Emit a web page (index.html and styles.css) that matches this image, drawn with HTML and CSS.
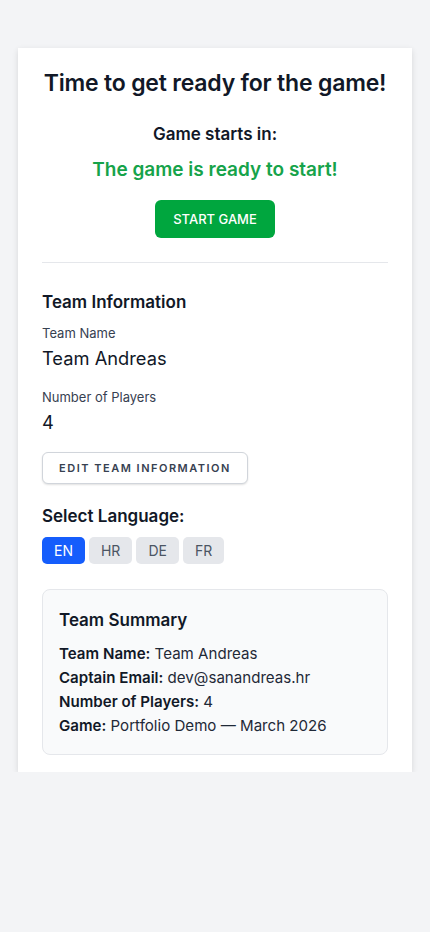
FILE: index.html
```html
<!DOCTYPE html>
<html lang="en">
<head>
<meta charset="utf-8">
<title>Team Lobby</title>
<link rel="stylesheet" href="styles.css">
</head>
<body>
<main class="card">
  <h1 class="title">Time to get ready for the game!</h1>
  <section class="countdown">
    <h2 class="starts">Game starts in:</h2>
    <p class="ready">The game is ready to start!</p>
    <button class="start-btn">START GAME</button>
  </section>
  <hr class="divider">
  <section class="info">
    <h3 class="section-title">Team Information</h3>
    <div class="field">
      <div class="label">Team Name</div>
      <div class="value">Team Andreas</div>
    </div>
    <div class="field">
      <div class="label">Number of Players</div>
      <div class="value">4</div>
    </div>
    <button class="edit-btn">EDIT TEAM INFORMATION</button>
  </section>
  <section class="lang">
    <h3 class="section-title">Select Language:</h3>
    <div class="lang-list">
      <button class="lang-btn active">EN</button>
      <button class="lang-btn">HR</button>
      <button class="lang-btn">DE</button>
      <button class="lang-btn">FR</button>
    </div>
  </section>
  <section class="summary">
    <h3 class="summary-title">Team Summary</h3>
    <p class="row"><b>Team Name:</b> Team Andreas</p>
    <p class="row"><b>Captain Email:</b> dev@sanandreas.hr</p>
    <p class="row"><b>Number of Players:</b> 4</p>
    <p class="row"><b>Game:</b> Portfolio Demo — March 2026</p>
  </section>
</main>
</body>
</html>
```
FILE: styles.css
```css
* { box-sizing: border-box; }
html, body { margin: 0; padding: 0; }
body {
  background: #f3f4f6;
  font-family: "Inter", "Noto Sans", sans-serif;
  color: #111827;
  padding: 48px 18px 0 18px;
}
.card {
  background: #fff;
  width: 394px;
  padding: 20px 24px 17px;
  box-shadow: 0 2px 6px rgba(0,0,0,0.12);
}
.title {
  margin: 0 -12px;
  font-size: 23px;
  font-weight: 600;
  text-align: center;
  line-height: 30px;
  letter-spacing: -0.2px;
  white-space: nowrap;
}
.countdown {
  display: flex;
  flex-direction: column;
  align-items: center;
  margin-top: 24px;
}
.starts {
  margin: 0;
  font-size: 17px;
  font-weight: 600;
  line-height: 24px;
}
.ready {
  margin: 10px 0 0;
  font-size: 19px;
  font-weight: 600;
  color: #16a34a;
  line-height: 28px;
}
.start-btn {
  margin-top: 16px;
  width: 120px;
  height: 38px;
  border: none;
  border-radius: 6px;
  background: #00a63e;
  color: #fff;
  font-family: inherit;
  font-size: 13px;
  font-weight: 500;
}
.divider {
  border: none;
  border-top: 1px solid #e5e7eb;
  margin: 24px 0 0;
}
.info { margin-top: 27px; }
.section-title {
  margin: 0;
  font-size: 17px;
  font-weight: 600;
  line-height: 24px;
}
.field { margin-top: 9px; }
.field + .field { margin-top: 14px; }
.label {
  font-size: 13px;
  color: #374151;
  line-height: 20px;
}
.value {
  font-size: 18.3px;
  line-height: 30px;
  color: #111827;
}
.edit-btn {
  margin-top: 15px;
  width: 206px;
  height: 32px;
  background: #fff;
  border: 1px solid #d1d5db;
  border-radius: 6px;
  box-shadow: 0 1px 2px rgba(0,0,0,0.12);
  font-family: inherit;
  font-size: 11px;
  font-weight: 600;
  letter-spacing: 1.5px;
  color: #374151;
}
.lang { margin-top: 20px; }
.lang-list {
  display: flex;
  gap: 4px;
  margin-top: 9px;
}
.lang-btn {
  height: 27px;
  padding: 0 12px;
  border: none;
  border-radius: 5px;
  background: #e5e7eb;
  color: #4b5563;
  font-family: inherit;
  font-size: 14px;
}
.lang-btn.active { background: #155dfc; color: #fff; }
.summary {
  margin-top: 25px;
  background: #f9fafb;
  border: 1px solid #e5e7eb;
  border-radius: 8px;
  padding: 18px 16px 16px;
}
.summary-title {
  margin: 0 0 10px;
  font-size: 17px;
  font-weight: 600;
  line-height: 24px;
}
.row {
  margin: 0;
  font-size: 15.1px;
  line-height: 24px;
  color: #1f2937;
}
.row b { font-weight: 600; color: #111827; }
```
